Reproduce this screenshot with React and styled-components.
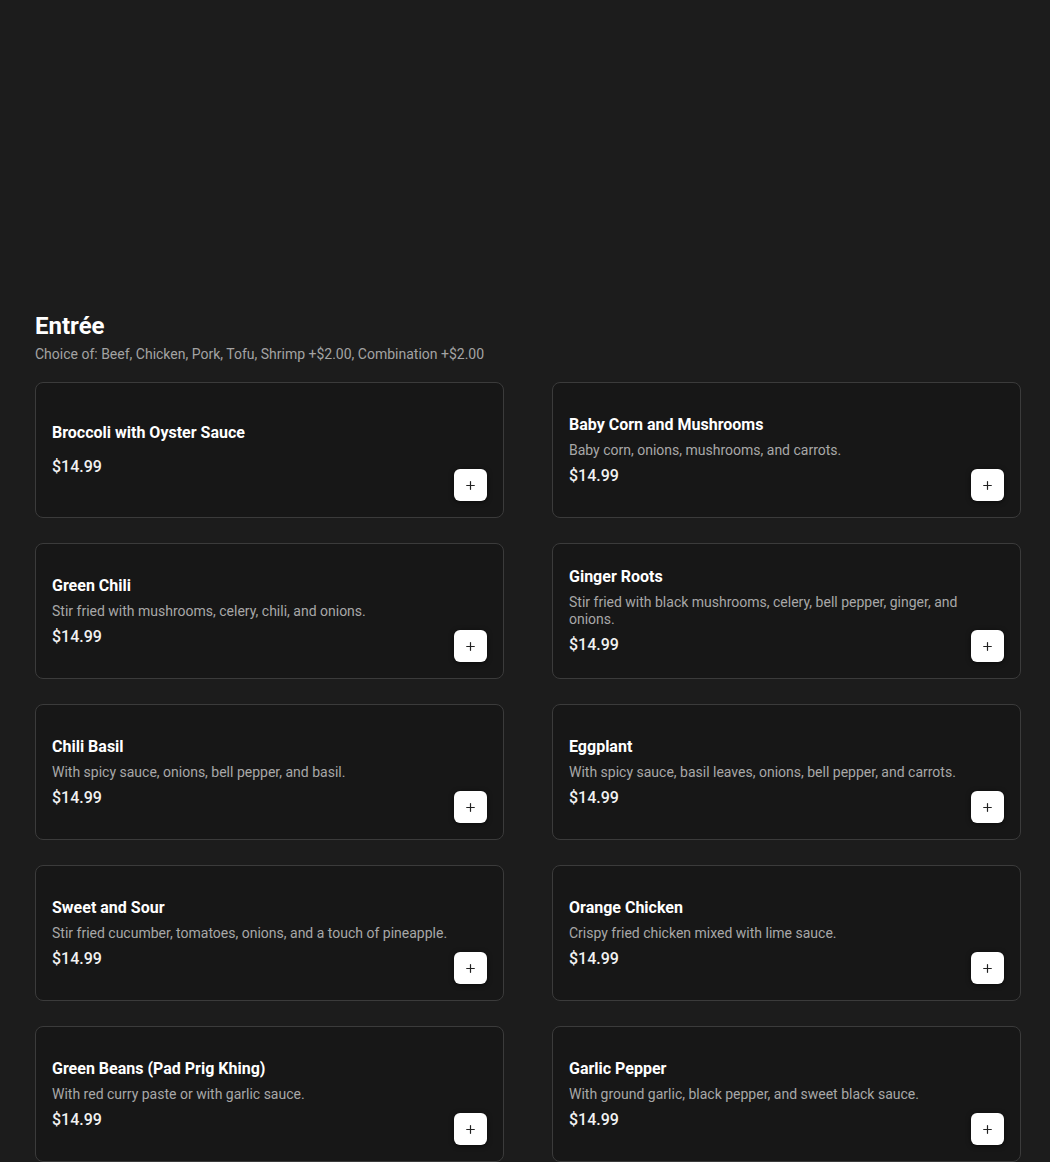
import React from 'react'
import styled, { createGlobalStyle } from 'styled-components'
import { Plus } from 'lucide-react'

const GlobalStyle = createGlobalStyle`
    * { box-sizing: border-box; }
    body {
        margin: 0;
        background: #1c1c1c;
        font-family: Roboto, "Liberation Sans", Arial, sans-serif;
        color: #fff;
    }
`;

const items = [
    { name: 'Broccoli with Oyster Sauce', desc: '', price: '$14.99' },
    { name: 'Baby Corn and Mushrooms', desc: 'Baby corn, onions, mushrooms, and carrots.', price: '$14.99' },
    { name: 'Green Chili', desc: 'Stir fried with mushrooms, celery, chili, and onions.', price: '$14.99' },
    { name: 'Ginger Roots', desc: 'Stir fried with black mushrooms, celery, bell pepper, ginger, and onions.', price: '$14.99' },
    { name: 'Chili Basil', desc: 'With spicy sauce, onions, bell pepper, and basil.', price: '$14.99' },
    { name: 'Eggplant', desc: 'With spicy sauce, basil leaves, onions, bell pepper, and carrots.', price: '$14.99' },
    { name: 'Sweet and Sour', desc: 'Stir fried cucumber, tomatoes, onions, and a touch of pineapple.', price: '$14.99' },
    { name: 'Orange Chicken', desc: 'Crispy fried chicken mixed with lime sauce.', price: '$14.99' },
    { name: 'Green Beans (Pad Prig Khing)', desc: 'With red curry paste or with garlic sauce.', price: '$14.99' },
    { name: 'Garlic Pepper', desc: 'With ground garlic, black pepper, and sweet black sauce.', price: '$14.99' },
]

function App() {
    return (
        <>
            <GlobalStyle />
            <Page>
                <Hero />
                <Section>
                    <h2 className="title">Entrée</h2>
                    <p className="choice">Choice of: Beef, Chicken, Pork, Tofu, Shrimp +$2.00, Combination +$2.00</p>
                    <Grid>
                        {items.map((item) => (
                            <Card key={item.name}>
                                <div className="info">
                                    <h3>{item.name}</h3>
                                    <p className="desc">{item.desc}</p>
                                    <span className="price">{item.price}</span>
                                </div>
                                <AddButton aria-label={`Add ${item.name}`}>
                                    <Plus size={13} strokeWidth={2.2} />
                                </AddButton>
                            </Card>
                        ))}
                    </Grid>
                </Section>
            </Page>
        </>
    )
}

const Page = styled.div`
    display: flex;
    flex-direction: column;
    width: 100%;
`;

const Hero = styled.div`
    height: 310px; /* banner image area, empty here */
`;

const Section = styled.section`
    padding: 0 29px 0 35px;
    .title {
        margin: 0;
        font-size: 24px;
        line-height: 32px;
        font-weight: 700;
        color: #fff;
    }
    .choice {
        margin: 2px 0 0;
        font-size: 14px;
        line-height: 20px;
        color: #a3a3a3;
    }
`;

const Grid = styled.div`
    display: grid;
    grid-template-columns: 1fr 1fr;
    column-gap: 48px;
    row-gap: 25px;
    margin-top: 18px;
`;

/* info and button share one grid cell: text runs full width, button sits bottom-right */
const Card = styled.div`
    display: grid;
    grid-template-columns: 1fr;
    grid-template-rows: 1fr;
    min-height: 136px;
    padding: 16px;
    background: #171717;
    border: 1px solid #3b3b3b;
    border-radius: 8px;
    .info {
        grid-area: 1 / 1;
        align-self: center;
        display: flex;
        flex-direction: column;
        gap: 5px;
    }
    h3 {
        margin: 0;
        font-size: 16px;
        line-height: 24px;
        font-weight: 700;
        color: #fff;
    }
    .desc {
        margin: 0;
        font-size: 14px;
        line-height: 17px;
        color: #a8a8a8;
    }
    .price {
        font-size: 16px;
        line-height: 24px;
        font-weight: 500;
        color: #f2f2f2;
    }
`;

const AddButton = styled.button`
    grid-area: 1 / 1;
    align-self: end;
    justify-self: end;
    display: flex;
    align-items: center;
    justify-content: center;
    width: 33px;
    height: 32px;
    padding: 0;
    border: none;
    border-radius: 6px;
    background: #fff;
    color: #222;
    box-shadow: 0 1px 5px rgba(0, 0, 0, 0.6);
    cursor: pointer;
`;

export default App
